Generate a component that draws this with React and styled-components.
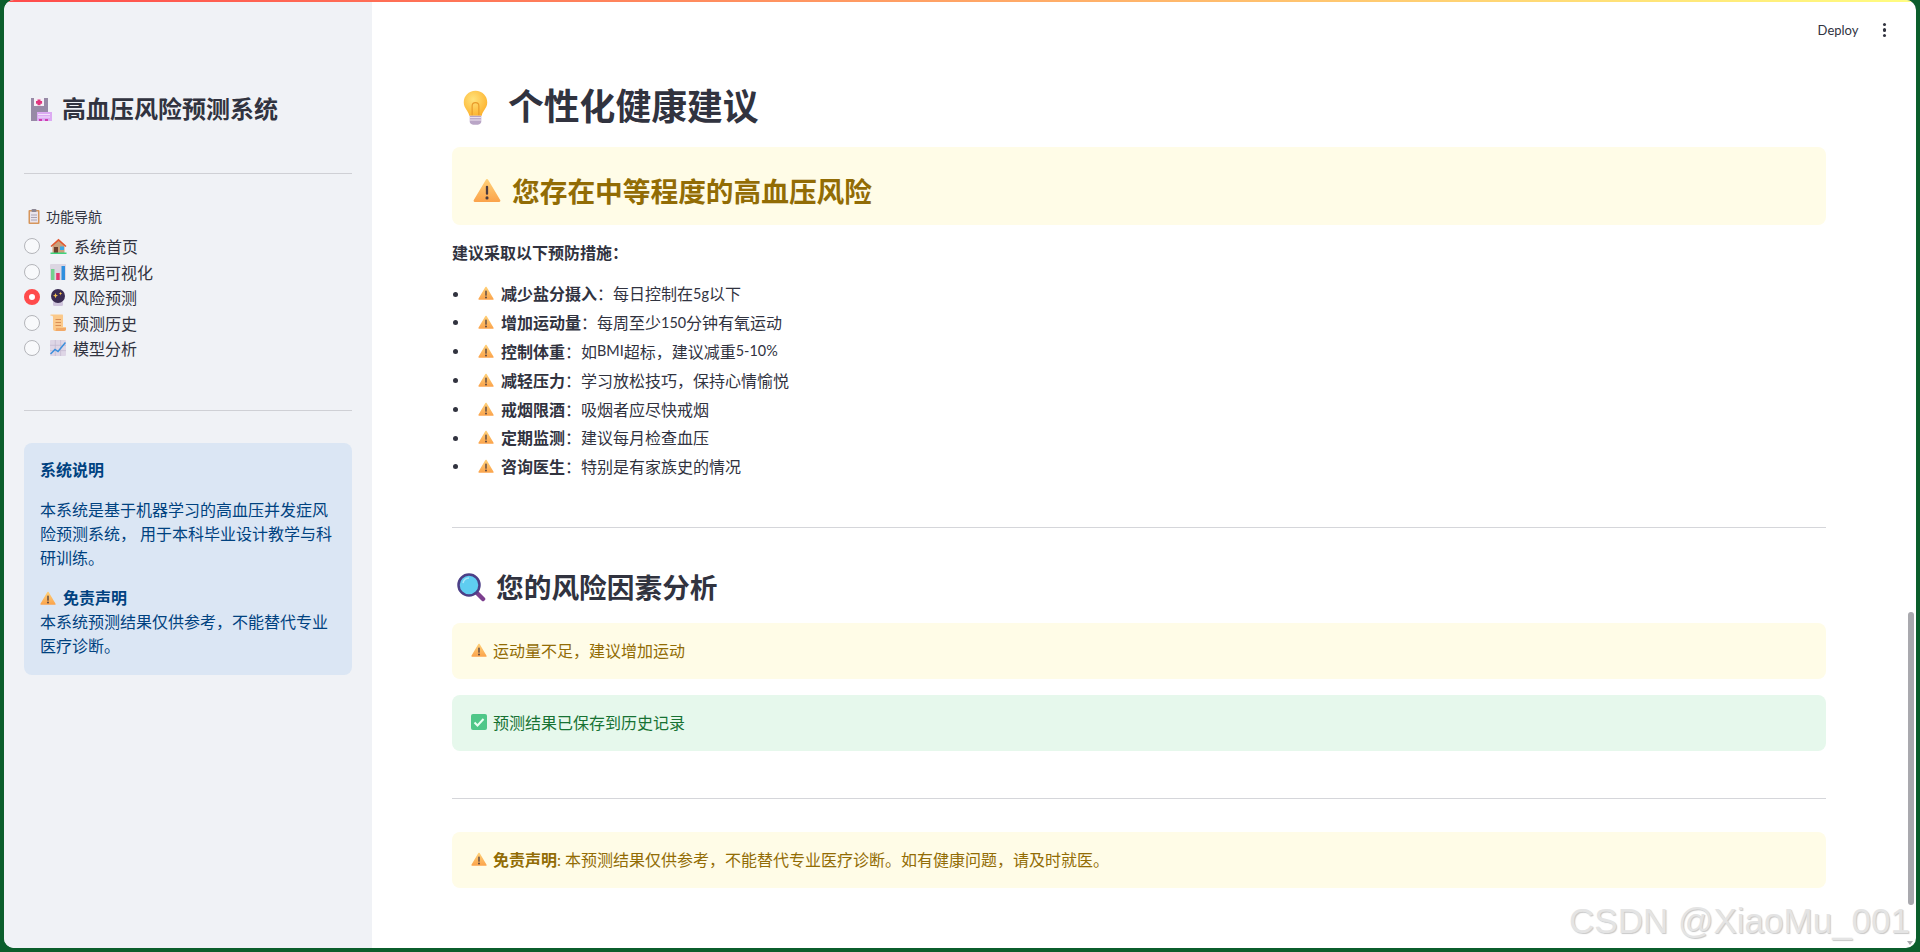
import styled, { createGlobalStyle } from "styled-components";

const FONT = `Lato, "Noto Sans CJK SC", sans-serif`;

const GlobalStyle = createGlobalStyle`
  html, body {
    margin: 0;
    padding: 0;
    height: 100%;
    overflow: hidden;
    background: #0b5e2c;
  }
  * { box-sizing: border-box; }
`;

const Frame = styled.div`
  position: relative;
  display: flex;
  height: 948px;
  margin: 0 4px;
  border-radius: 10px;
  overflow: hidden;
  background: #fff;
  font-family: ${FONT};
  color: #31333f;
`;

const TopBar = styled.div`
  position: absolute;
  top: 0;
  left: 0;
  right: 0;
  height: 2px;
  background: linear-gradient(90deg, #ff4b4b, #fffd80);
`;

const Sidebar = styled.aside`
  flex: 0 0 368px;
  padding: 91px 20px 0;
  background: #f0f2f6;
`;

const BrandTitle = styled.h1`
  display: flex;
  align-items: center;
  gap: 10px;
  height: 36px;
  margin: 0 0 46px 6px;
  font-size: 24px;
  font-weight: 700;
  line-height: 36px;
`;

const Rule = styled.hr`
  height: 1px;
  margin: 0;
  border: none;
  background: ${(p) => p.$color || "#cfd0d5"};
`;

const NavLabel = styled.div`
  display: flex;
  align-items: center;
  gap: 6px;
  margin: 31px 0 6.3px 4px;
  height: 22px;
  font-size: 14px;
`;

const RadioList = styled.div`
  display: flex;
  flex-direction: column;
  margin-bottom: 49.2px;
`;

const RadioRow = styled.label`
  display: flex;
  align-items: center;
  height: 25.6px;
  font-size: 16px;
`;

const RadioDot = styled.span`
  width: 16px;
  height: 16px;
  margin-right: 10px;
  border-radius: 50%;
  flex: none;
  background: ${(p) => (p.$on ? "#fff" : "#f8f9fb")};
  border: ${(p) => (p.$on ? "5px solid #ff4b4b" : "1.4px solid #b4b5ba")};
`;

const RadioIcon = styled.span`
  display: inline-flex;
  margin-right: 7px;
`;

const InfoCard = styled.div`
  margin-top: 32px;
  padding: 15px 16px 17px 16px;
  border-radius: 8px;
  background: #dbe6f4;
  color: #004280;
  font-size: 16px;
  line-height: 24px;
`;

const InfoTitle = styled.div`
  font-weight: 700;
  margin-bottom: 16px;
`;

const InfoBlock = styled.div`
  margin-bottom: 16px;
  &:last-child { margin-bottom: 0; }
`;

const InfoStrong = styled.div`
  display: flex;
  align-items: center;
  gap: 7px;
  font-weight: 700;
`;

const Main = styled.main`
  flex: 1;
  position: relative;
  padding: 85px 90px 0 80px;
`;

const PageTitle = styled.h2`
  display: flex;
  align-items: center;
  gap: 20px;
  height: 44px;
  margin: 0 0 18px 11px;
  font-size: 35.8px;
  font-weight: 700;
  line-height: 44px;
`;

const Alert = styled.div`
  display: flex;
  align-items: center;
  height: 56px;
  padding: 0 16px 2px 19px;
  gap: 6px;
  margin-top: ${(p) => p.$top ?? 0}px;
  margin-bottom: ${(p) => p.$gap ?? 16}px;
  border-radius: 8px;
  font-size: 16px;
  color: ${(p) => (p.$kind === "success" ? "#177233" : "#926c05")};
  background: ${(p) => (p.$kind === "success" ? "#e6f8ec" : "#fffce7")};
`;

const BigAlert = styled(Alert)`
  height: 78px;
  padding: 7px 16px 0 21px;
  gap: 11px;
  font-size: 27.7px;
  font-weight: 700;
  margin-bottom: 15px;
`;

const Lead = styled.p`
  margin: 0 0 15px;
  font-size: 16px;
  font-weight: 700;
  line-height: 25.6px;
`;

const TipList = styled.ul`
  margin: 0 0 48px;
  padding: 0;
  list-style: none;
`;

const Tip = styled.li`
  position: relative;
  display: flex;
  align-items: center;
  height: 25.6px;
  margin-bottom: 3.2px;
  padding-left: 26px;
  font-size: 16px;
  &::before {
    content: "";
    position: absolute;
    left: 1px;
    top: 11px;
    width: 5px;
    height: 5px;
    border-radius: 50%;
    background: #31333f;
  }
`;

const TipIcon = styled.span`
  display: inline-flex;
  margin-right: 7px;
`;

/* digits and latin letters run narrower in the reference than Lato at 16px */
const Latin = styled.span`
  font-size: 14.4px;
`;

const SubTitle = styled.h3`
  display: flex;
  align-items: center;
  gap: 10px;
  height: 34px;
  margin: 43px 0 18px 5px;
  font-size: 27.7px;
  font-weight: 700;
  line-height: 34px;
`;

const HeaderActions = styled.div`
  position: absolute;
  top: 19px;
  right: 30px;
  display: flex;
  align-items: center;
  gap: 24px;
  font-size: 13px;
  height: 22px;
`;

const Kebab = styled.span`
  display: flex;
  flex-direction: column;
  gap: 2px;
  i {
    display: block;
    width: 3.5px;
    height: 3.5px;
    border-radius: 50%;
    background: #31333f;
  }
`;

const ScrollTrack = styled.div`
  position: absolute;
  right: 2px;
  top: 612px;
  width: 6px;
  height: 293px;
  border-radius: 3px;
  background: #a9a9ae;
`;

const ScrollArrow = styled.div`
  position: absolute;
  right: 3px;
  bottom: 3px;
  width: 0;
  height: 0;
  border-left: 3px solid transparent;
  border-right: 3px solid transparent;
  border-top: 4px solid #a9a9ae;
`;

const Watermark = styled.div`
  position: absolute;
  right: 6px;
  bottom: 9px;
  font-family: "Liberation Sans", sans-serif;
  font-size: 35px;
  line-height: 36px;
  color: #e4e4e4;
  text-shadow: 1px 1px 1px #c8c8c8;
  white-space: nowrap;
`;

const Warn = ({ size = 16 }) => (
  <svg width={size} height={size} viewBox="0 0 32 32">
    <defs>
      <linearGradient id="warnFill" gradientUnits="userSpaceOnUse" x1="0" y1="3" x2="0" y2="30">
        <stop offset="0" stopColor="#ffd27a" />
        <stop offset="1" stopColor="#fba24a" />
      </linearGradient>
    </defs>
    <path d="M16 5 L29.800 28.200 H2.200Z" fill="url(#warnFill)" stroke="url(#warnFill)" strokeWidth="3" strokeLinejoin="round" />
    <rect x="14.700" y="11" width="2.600" height="10.500" rx="1.200" fill="#4b3b3f" />
    <circle cx="16" cy="25" r="1.800" fill="#4b3b3f" />
  </svg>
);

const Hospital = () => (
  <svg width="22" height="24" viewBox="0 0 22 24">
    <path d="M1 1h17v23H1z" fill="#978aa6" />
    <rect x="4" y="1" width="10" height="8" fill="#f4eff6" />
    <path d="M7.500 2.500h3v1.600h1.600v2.600h-1.600v1.600h-3V6.700H6V4.100h1.500z" fill="#e0357e" />
    <rect x="7" y="15" width="15" height="9" fill="#dcaaf2" />
    <path d="M8 17h12v1H8zM8 19.500h12v1H8z" fill="#f2e2fb" />
    <path d="M9 22h3v2H9zM15 22h3v2h-3z" fill="#d03cb0" />
  </svg>
);

const Clipboard = () => (
  <svg width="12" height="15" viewBox="0 0 12 15">
    <rect x="0.500" y="1" width="11" height="14" rx="1" fill="#d6965c" />
    <rect x="2" y="2.500" width="8" height="11" fill="#e9e4ec" />
    <rect x="3.500" y="0" width="5" height="3" rx="1" fill="#8d8794" />
    <path d="M3 5.500h6v1H3zM3 8h6v1H3zM3 10.500h6v1H3z" fill="#a9a3b3" />
  </svg>
);

const House = () => (
  <svg width="17" height="16" viewBox="0 0 17 16">
    <path d="M2.500 7 8.500 2l6 5v8h-12z" fill="#c9a07c" />
    <path d="M0.500 8 8.500 0.800 16.500 8l-1 1-7-6-7 6z" fill="#e2572f" />
    <rect x="4" y="9" width="4" height="6" fill="#6e3f2c" />
    <rect x="10" y="8.500" width="4" height="3.500" fill="#3ba7e4" />
    <rect x="0.500" y="14.500" width="16" height="1.500" fill="#3fd47c" />
  </svg>
);

const Bars = () => (
  <svg width="16" height="16" viewBox="0 0 16 16">
    <rect width="16" height="16" rx="1" fill="#dcd6e2" />
    <rect x="1" y="5" width="3.500" height="11" fill="#72d08e" />
    <rect x="6.200" y="9" width="3.500" height="7" fill="#e2376f" />
    <rect x="11.500" y="2" width="3.500" height="14" fill="#2f8fde" />
  </svg>
);

const Ball = () => (
  <svg width="16" height="17" viewBox="0 0 16 17">
    <rect x="3" y="12" width="10" height="5" rx="1.500" fill="#cfc4dc" />
    <circle cx="8" cy="7" r="7" fill="#3b2c52" />
    <path d="M5.500 4 6.300 6 8 6.600 6.300 7.300 5.500 9.200 4.700 7.300 3 6.600 4.700 6zM10.500 2.800l.5 1.300 1.300.5-1.300.5-.5 1.300-.5-1.300-1.300-.5 1.300-.5z" fill="#f5c451" />
  </svg>
);

const Scroll = () => (
  <svg width="16" height="17" viewBox="0 0 16 17">
    <path d="M0.500 0.500H12c.8 0 1 .6 1 1.200V13h3v2c0 1-.7 2-2 2H5c-1 0-2-.8-2-2V3C3 1.800 1.800 1.600.5 1.800z" fill="#fbc98a" />
    <path d="M5.500 5h5.500v1H5.500zM5.500 8h5.500v1H5.500zM5.500 11h5.500v1H5.500z" fill="#d98d55" />
    <path d="M6 14h10v1c0 1-.7 2-2 2H5c1 0 1-1.500 1-3z" fill="#f2a968" />
  </svg>
);

const Trend = () => (
  <svg width="16" height="16" viewBox="0 0 16 16">
    <rect width="16" height="16" rx="1" fill="#ded6e6" />
    <path d="M0 5.300h16M0 10.600h16M5.300 0v16M10.600 0v16" stroke="#c3b8cf" strokeWidth=".7" />
    <path d="M0.500 14 5 9.500 8 11.500 15.500 2.500" fill="none" stroke="#3a8fdc" strokeWidth="1.500" />
  </svg>
);

const Bulb = () => (
  <svg width="25" height="35" viewBox="0 0 26 36">
    <defs>
      <radialGradient id="bulbFill" cx="0.4" cy="0.35" r="0.7">
        <stop offset="0" stopColor="#ffe27a" />
        <stop offset="1" stopColor="#fdb22e" />
      </radialGradient>
    </defs>
    <path d="M13 0.500C5.800.5.800 6 .8 12.500c0 6.500 4.700 8.500 5.700 14h13c1-5.500 5.700-7.500 5.700-14C25.200 6 20.200.5 13 .5z" fill="url(#bulbFill)" />
    <path d="M9.500 26V16.500a3.500 3.500 0 1 1 7 0V26" fill="none" stroke="#e89a2a" strokeWidth="1.200" />
    <path d="M7 26.500h12v6.500c0 1.500-2 3-6 3s-6-1.500-6-3z" fill="#b9a5c6" />
    <path d="M7 28.500h12M7 31h12" stroke="#f0e8f4" strokeWidth="1" />
  </svg>
);

const Magnifier = () => (
  <svg width="29" height="29" viewBox="0 0 29 29">
    <path d="M18 18l8 8" stroke="#7c3f8e" strokeWidth="4.500" strokeLinecap="round" />
    <circle cx="12" cy="12" r="10.500" fill="#5fcdf0" stroke="#4c3f87" strokeWidth="2.500" />
    <path d="M6 10a6.500 6.500 0 0 1 6-5" stroke="#a8e6f8" strokeWidth="1.500" fill="none" />
  </svg>
);

const Check = () => (
  <svg width="16" height="16" viewBox="0 0 16 16">
    <rect width="16" height="16" rx="2" fill="#4fc788" />
    <path d="M3.500 8.500 6.500 11.500 12.500 5" fill="none" stroke="#eafff2" strokeWidth="2" />
  </svg>
);

const navItems = [
  { icon: <House />, text: "系统首页" },
  { icon: <Bars />, text: "数据可视化" },
  { icon: <Ball />, text: "风险预测", on: true },
  { icon: <Scroll />, text: "预测历史" },
  { icon: <Trend />, text: "模型分析" },
];

const tips = [
  ["减少盐分摄入", <>每日控制在<Latin>5g</Latin>以下</>],
  ["增加运动量", <>每周至少<Latin>150</Latin>分钟有氧运动</>],
  ["控制体重", <>如<Latin>BMI</Latin>超标，建议减重<Latin>5-10%</Latin></>],
  ["减轻压力", "学习放松技巧，保持心情愉悦"],
  ["戒烟限酒", "吸烟者应尽快戒烟"],
  ["定期监测", "建议每月检查血压"],
  ["咨询医生", "特别是有家族史的情况"],
];

export default function App() {
  return (
    <>
      <GlobalStyle />
      <Frame>
        <Sidebar>
          <BrandTitle>
            <Hospital />
            高血压风险预测系统
          </BrandTitle>
          <Rule />
          <NavLabel>
            <Clipboard />
            功能导航
          </NavLabel>
          <RadioList>
            {navItems.map((item) => (
              <RadioRow key={item.text}>
                <RadioDot $on={item.on} />
                <RadioIcon>{item.icon}</RadioIcon>
                {item.text}
              </RadioRow>
            ))}
          </RadioList>
          <Rule />
          <InfoCard>
            <InfoTitle>系统说明</InfoTitle>
            <InfoBlock>本系统是基于机器学习的高血压并发症风险预测系统， 用于本科毕业设计教学与科研训练。</InfoBlock>
            <InfoBlock>
              <InfoStrong>
                <Warn />
                免责声明
              </InfoStrong>
              本系统预测结果仅供参考，不能替代专业医疗诊断。
            </InfoBlock>
          </InfoCard>
        </Sidebar>
        <Main>
          <HeaderActions>
            <span>Deploy</span>
            <Kebab>
              <i />
              <i />
              <i />
            </Kebab>
          </HeaderActions>
          <PageTitle>
            <Bulb />
            个性化健康建议
          </PageTitle>
          <BigAlert>
            <Warn size={28} />
            您存在中等程度的高血压风险
          </BigAlert>
          <Lead>建议采取以下预防措施：</Lead>
          <TipList>
            {tips.map(([head, body]) => (
              <Tip key={head}>
                <TipIcon>
                  <Warn />
                </TipIcon>
                <strong>{head}</strong>：{body}
              </Tip>
            ))}
          </TipList>
          <Rule $color="#d5d6da" />
          <SubTitle>
            <Magnifier />
            您的风险因素分析
          </SubTitle>
          <Alert>
            <Warn />
            运动量不足，建议增加运动
          </Alert>
          <Alert $kind="success" $gap={47}>
            <Check />
            预测结果已保存到历史记录
          </Alert>
          <Rule $color="#d5d6da" />
          <Alert $top={33}>
            <Warn />
            <span>
              <strong>免责声明</strong>: 本预测结果仅供参考，不能替代专业医疗诊断。如有健康问题，请及时就医。
            </span>
          </Alert>
        </Main>
        <TopBar />
        <ScrollTrack />
        <ScrollArrow />
        <Watermark>CSDN @XiaoMu_001</Watermark>
      </Frame>
    </>
  );
}
